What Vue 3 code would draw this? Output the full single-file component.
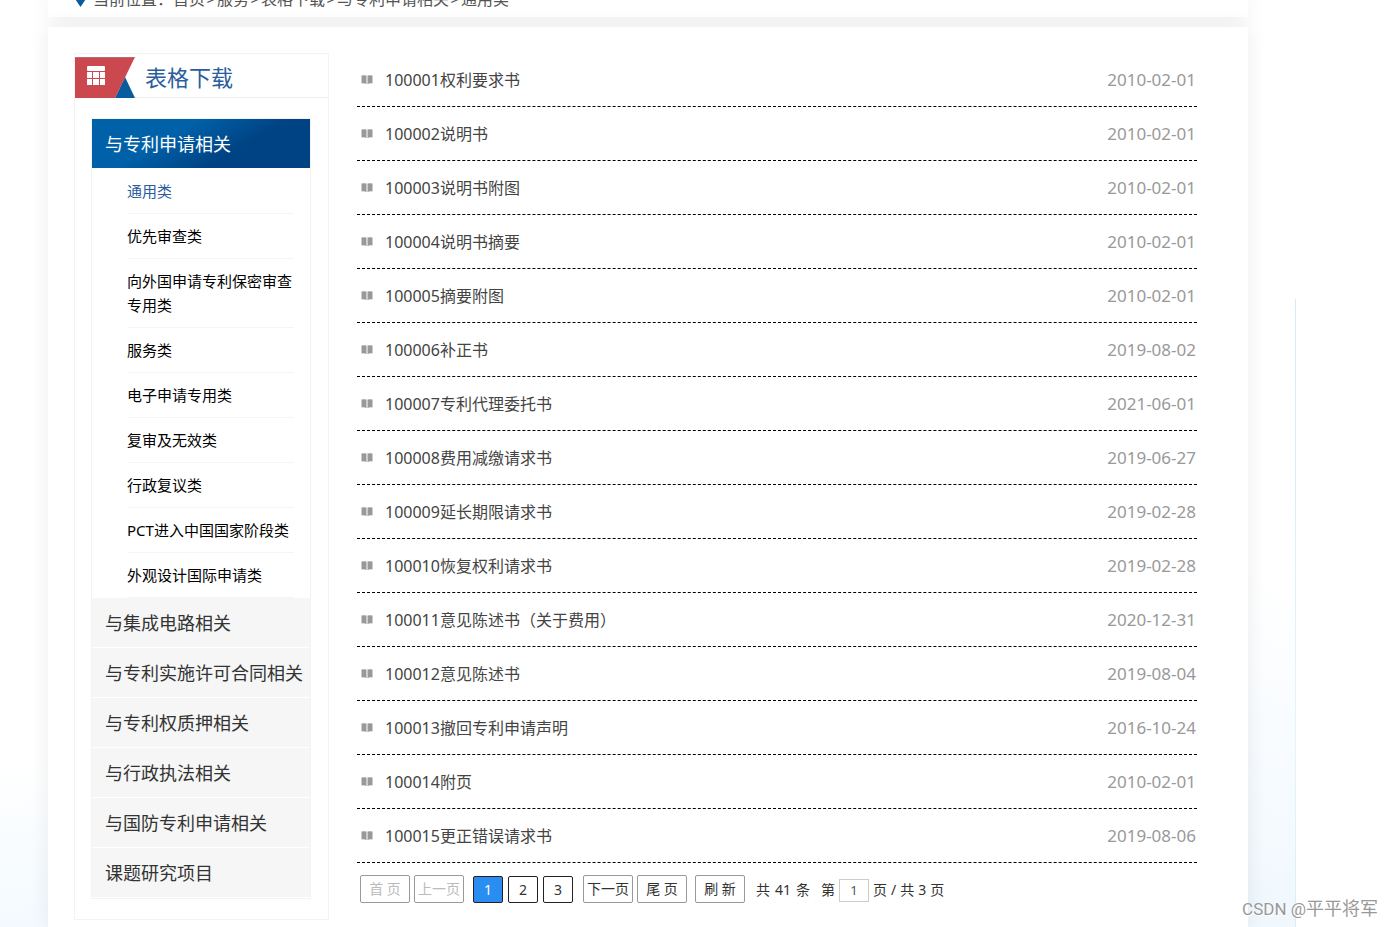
<script setup>
import { ref } from 'vue'

const crumbs = ['首页', '服务', '表格下载', '与专利申请相关', '通用类']

const subItems = [
  '通用类',
  '优先审查类',
  '向外国申请专利保密审查专用类',
  '服务类',
  '电子申请专用类',
  '复审及无效类',
  '行政复议类',
  'PCT进入中国国家阶段类',
  '外观设计国际申请类'
]

const groups = [
  { title: '与专利申请相关', children: subItems },
  { title: '与集成电路相关' },
  { title: '与专利实施许可合同相关' },
  { title: '与专利权质押相关' },
  { title: '与行政执法相关' },
  { title: '与国防专利申请相关' },
  { title: '课题研究项目' }
]

const forms = [
  ['100001权利要求书', '2010-02-01'],
  ['100002说明书', '2010-02-01'],
  ['100003说明书附图', '2010-02-01'],
  ['100004说明书摘要', '2010-02-01'],
  ['100005摘要附图', '2010-02-01'],
  ['100006补正书', '2019-08-02'],
  ['100007专利代理委托书', '2021-06-01'],
  ['100008费用减缴请求书', '2019-06-27'],
  ['100009延长期限请求书', '2019-02-28'],
  ['100010恢复权利请求书', '2019-02-28'],
  ['100011意见陈述书（关于费用）', '2020-12-31'],
  ['100012意见陈述书', '2019-08-04'],
  ['100013撤回专利申请声明', '2016-10-24'],
  ['100014附页', '2010-02-01'],
  ['100015更正错误请求书', '2019-08-06']
]

const page = ref(1)
</script>

<template>
  <div class="site">
    <div class="column">
      <nav class="panel crumbs" aria-label="当前位置">
        <svg class="pin" width="13" height="20" viewBox="0 0 13 20" aria-hidden="true">
          <path d="M6.5 20 L0.8 11.5 A6.2 6.2 0 1 1 12.2 11.5 Z" fill="#0b5a9e" />
          <circle cx="6.500" cy="7" r="2.500" fill="#fff" />
        </svg>
        <span>当前位置：</span>
        <template v-for="(c, i) in crumbs" :key="c">
          <span v-if="i" class="sep">&gt;</span>
          <a href="#">{{ c }}</a>
        </template>
      </nav>

      <main class="panel body">
        <aside class="side">
          <h2 class="side-title">
            <svg width="60" height="41" viewBox="0 0 60 41" aria-hidden="true">
              <path d="M50 20 L60 41 H40 Z" fill="#075c9f" />
              <path d="M0 0 H60 L40 41 H0 Z" fill="#cb484e" />
              <path d="M0 .5 H60" stroke="#b56b7c" stroke-width="1" />
              <g fill="#fff">
                <rect x="12" y="9" width="18" height="5" rx="1" />
                <rect x="12" y="15" width="5" height="6" />
                <rect x="18" y="15" width="6" height="6" />
                <rect x="25" y="15" width="5" height="6" />
                <rect x="12" y="22" width="5" height="6" />
                <rect x="18" y="22" width="6" height="6" />
                <rect x="25" y="22" width="5" height="6" />
              </g>
            </svg>
            <span>表格下载</span>
          </h2>
          <ul class="groups">
            <li v-for="g in groups" :key="g.title">
              <a href="#" class="group" :class="{ active: g.children }">{{ g.title }}</a>
              <ul v-if="g.children" class="subs">
                <li v-for="(s, i) in g.children" :key="s">
                  <a href="#" :class="{ current: i === 0 }">{{ s }}</a>
                </li>
              </ul>
            </li>
          </ul>
        </aside>

        <section class="content">
          <ul class="forms">
            <li v-for="f in forms" :key="f[0]">
              <svg width="12" height="10" viewBox="0 0 12 10" aria-hidden="true">
                <path d="M.5 .5 Q3 0 5.500 .5 V9 Q3 8 .5 8.500 Z M6.500 .5 Q9 0 11.500 .5 V8.500 Q9 8 6.500 9 Z" fill="#999" />
              </svg>
              <a href="#">{{ f[0] }}</a>
              <time>{{ f[1] }}</time>
            </li>
          </ul>

          <div class="pager">
            <div class="set">
              <button type="button" disabled>首 页</button>
              <button type="button" disabled>上一页</button>
            </div>
            <div class="set numbers">
              <button
                v-for="n in 3"
                :key="n"
                type="button"
                class="num"
                :class="{ on: n === page }"
                @click="page = n"
              >{{ n }}</button>
            </div>
            <div class="set">
              <button type="button">下一页</button>
              <button type="button">尾 页</button>
            </div>
            <button type="button" class="refresh">刷 新</button>
            <div class="jump">
              <span class="words total"><span>共</span><span>41</span><span>条</span></span>
              <label for="page-no">第</label>
              <input id="page-no" v-model="page" type="text" />
              <span class="words"><span>页</span><span>/</span><span>共</span><span>3</span><span>页</span></span>
            </div>
          </div>
        </section>
      </main>
    </div>
    <div class="mark"><span class="latin">CSDN @</span>平平将军</div>
  </div>
</template>

<style>
body {
  margin: 0;
  background: #fff;
}
</style>

<style scoped>
.site {
  position: relative;
  box-sizing: border-box;
  min-height: 100vh;
  padding-right: 97px;
  font-family: "Noto Sans", "Noto Sans CJK SC", sans-serif;
  font-size: 16px;
  color: #333;
  overflow: hidden;
  display: flex;
}
a {
  color: inherit;
  text-decoration: none;
}
ul {
  list-style: none;
  margin: 0;
  padding: 0;
}
.column {
  flex: 1;
  display: flex;
  flex-direction: column;
  gap: 10px;
  padding: 0 48px;
  background:
    linear-gradient(#fff0 299px, #d3ebf8 299px, #e6f4fa 80%, #d8eef7) right / 1px 100% no-repeat,
    linear-gradient(#fff 62%, #f9fcff 78%, #f0f8fd) right / 50% 100% no-repeat,
    linear-gradient(#fff 82%, #f3faff) left / 50% 100% no-repeat;
}
.panel {
  background: #fff;
  box-shadow: 0 0 20px rgba(0, 0, 0, 0.08);
}
.crumbs {
  display: flex;
  align-items: flex-end;
  box-sizing: border-box;
  height: 17px;
  padding: 0 26px 6px;
  line-height: 24px;
  color: #555;
}
.pin {
  flex: none;
  margin: 0 6px 4px 0;
}
.sep {
  width: 12px;
  text-align: center;
}
.body {
  flex: 1;
  display: flex;
  gap: 28px;
  padding: 26px 51px 7px 26px;
}
.side {
  box-sizing: border-box;
  flex: none;
  width: 255px;
  padding-bottom: 20px;
  border: 1px solid #f3f3f3;
}
.side-title {
  display: flex;
  align-items: center;
  gap: 10px;
  height: 40px;
  margin: 0 0 20px;
  padding-top: 3px;
  border-bottom: 1px solid #eee;
  font-size: 22px;
  font-weight: 400;
  line-height: 40px;
  color: #2a5d9c;
}
.side-title svg {
  align-self: flex-start;
}
.groups {
  margin: 0 17px 0 16px;
  border: 1px solid #f3f3f3;
}
.group {
  display: block;
  padding: 2px 0 0 13px;
  border-bottom: 1px solid #fff;
  background: #f6f6f6;
  font-size: 18px;
  line-height: 47px;
  white-space: nowrap;
}
.group.active {
  background: linear-gradient(150deg, #0061a9 35%, #004384 65%) padding-box;
  color: #fff;
}
.subs {
  padding: 0 16px 0 35px;
}
.subs li {
  padding: 10px 0;
  border-bottom: 1px solid #f5f5f5;
  font-size: 15px;
  line-height: 24px;
  color: #000;
}
.current {
  color: #2a5d9c;
}
.content {
  flex: 1;
  min-width: 0;
}
.forms li {
  display: flex;
  align-items: center;
  gap: 12px;
  padding: 0 1px 0 4px;
  border-bottom: 1px dashed #000;
  line-height: 53px;
}
.forms a {
  flex: 1;
  padding-top: 2px;
  line-height: 51px;
  color: #444;
}
.forms time {
  font-size: 17px;
  color: #999;
}
.pager {
  display: flex;
  align-items: center;
  padding: 12px 3px 0;
  font-size: 14px;
  line-height: 20px;
  white-space: nowrap;
}
.set {
  display: flex;
  align-items: flex-end;
  align-self: stretch;
  gap: 4px;
}
.numbers {
  gap: 5px;
  padding: 0 10px 0 9px;
}
.pager button {
  box-sizing: border-box;
  width: 50px;
  height: 28px;
  padding: 0;
  border: 1px solid #999;
  border-radius: 2px;
  background: #fff;
  font: inherit;
  color: #333;
}
.pager button:disabled {
  color: #bbb;
}
.pager .num {
  width: 30px;
  height: 27px;
  border-color: #222;
}
.pager .on {
  background: #2a8df2;
  color: #fff;
}
.pager .refresh {
  margin: 0 11px 0 8px;
}
.jump {
  display: flex;
  align-items: center;
  padding-top: 2px;
}
.words {
  display: flex;
  gap: 4px;
}
.total {
  gap: 5px;
  margin-right: 11px;
}
.pager input {
  box-sizing: border-box;
  width: 30px;
  height: 23px;
  margin: 0 4px;
  padding: 0;
  border: 1px solid #ccc;
  font: inherit;
  font-size: 13px;
  text-align: center;
  color: #555;
}
.mark {
  position: absolute;
  right: 15px;
  bottom: 6px;
  font-family: Roboto, "Noto Sans CJK SC", sans-serif;
  font-size: 18px;
  line-height: 24px;
  color: #999;
  text-shadow: 1px 1px 1px #fff;
}
.latin {
  font-size: 17px;
}
</style>
